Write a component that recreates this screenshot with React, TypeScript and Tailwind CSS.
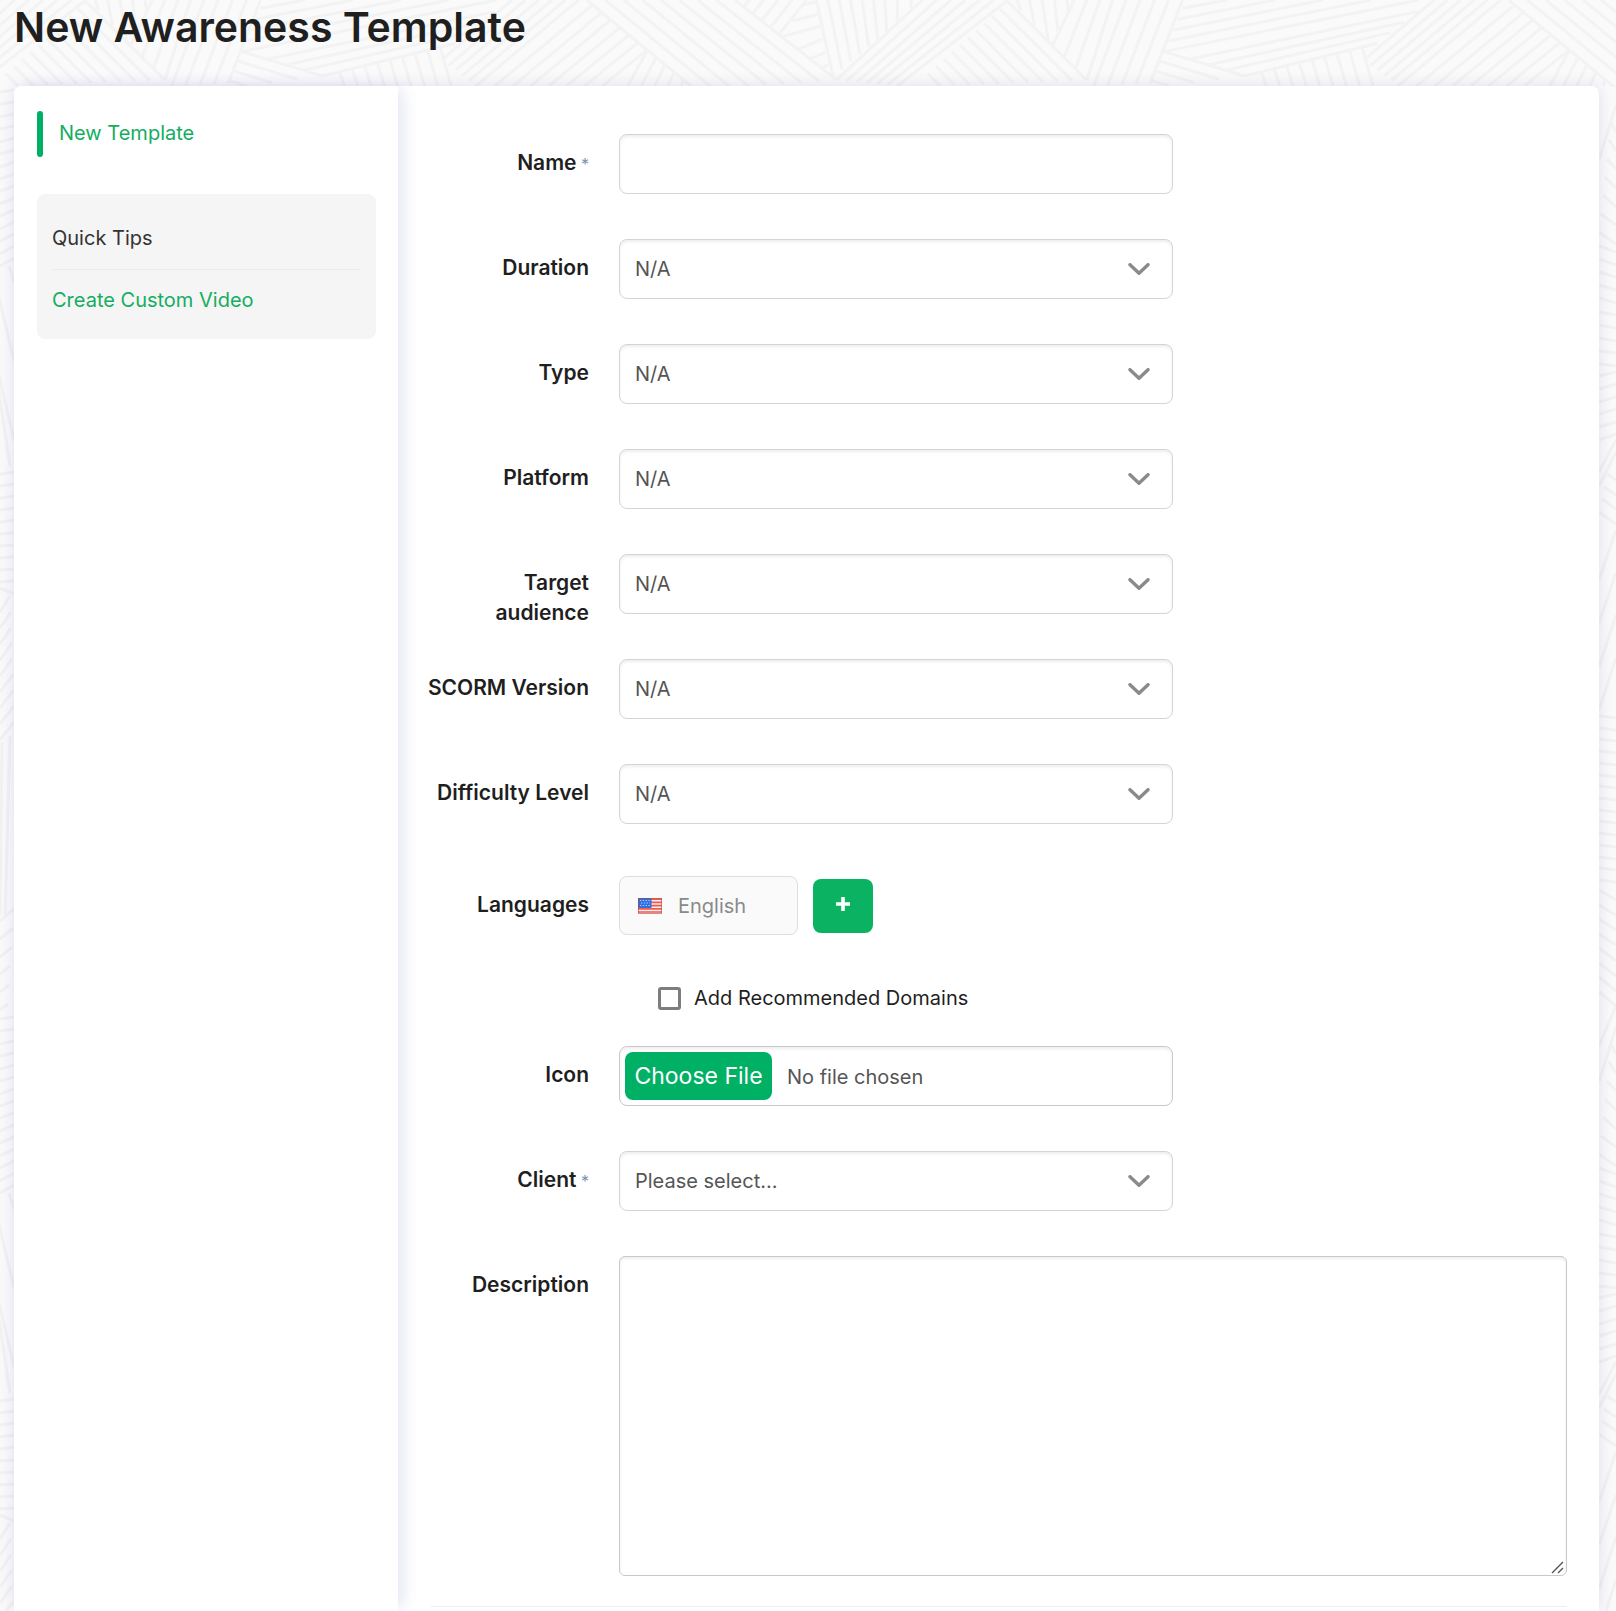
import type { ReactNode } from "react";

type Segment = [number, number, number, number];

/** Draws `n` strokes spread evenly between segment `a` and segment `b`. */
function Fan({ a, b, n }: { a: Segment; b: Segment; n: number }) {
  let d = "";
  for (let i = 0; i < n; i++) {
    const t = n === 1 ? 0 : i / (n - 1);
    const p = a.map((v, k) => Math.round(v + (b[k] - v) * t));
    d += `M${p[0]} ${p[1]}L${p[2]} ${p[3]}`;
  }
  return <path d={d} vectorEffect="non-scaling-stroke" />;
}

function WeaveTile() {
  return (
    <g id="weave-tile">
      <g transform="translate(560 0) scale(0.357 0.333)">
        <Fan a={[75, 0, 380, 270]} b={[490, 0, 775, 240]} n={9} />
        <Fan a={[245, 150, 190, 258]} b={[345, 235, 340, 258]} n={5} />
        <Fan a={[515, 20, 530, 0]} b={[612, 105, 690, 0]} n={5} />
        <Fan a={[680, 15, 720, 5]} b={[622, 110, 730, 78]} n={3} />
        <Fan a={[662, 150, 735, 118]} b={[730, 205, 750, 195]} n={3} />
        <Fan a={[718, 0, 765, 230]} b={[910, 0, 915, 95]} n={7} />
        <Fan a={[945, 0, 945, 65]} b={[985, 0, 982, 25]} n={2} />
        <Fan a={[1015, 0, 775, 240]} b={[1255, 0, 945, 258]} n={7} />
        <Fan a={[1030, 220, 1065, 258]} b={[1255, 5, 1475, 240]} n={11} />
        <Fan a={[1280, 0, 1290, 30]} b={[1350, 0, 1368, 122]} n={3} />
        <Fan a={[1385, 0, 1395, 95]} b={[1420, 0, 1425, 35]} n={2} />
      </g>
      <g transform="translate(1080 0) scale(0.342 0.333)">
        <Fan a={[-17, 0, -79, 135]} b={[95, 0, 20, 240]} n={4} />
        <Fan a={[135, 0, 40, 258]} b={[300, 0, 205, 250]} n={5} />
        <Fan a={[300, 25, 430, 0]} b={[245, 155, 990, 0]} n={5} />
        <Fan a={[320, 178, 985, 35]} b={[480, 228, 870, 130]} n={4} />
        <Fan a={[245, 155, 480, 228]} b={[205, 240, 260, 258]} n={4} />
        <Fan a={[530, 215, 545, 258]} b={[825, 142, 857, 258]} n={9} />
        <Fan a={[1035, 0, 830, 180]} b={[1230, 0, 930, 258]} n={6} />
        <Fan a={[1270, 15, 985, 258]} b={[1430, 150, 1300, 258]} n={7} />
      </g>
    </g>
  );
}

function Weave() {
  return (
    <div aria-hidden="true" className="pointer-events-none absolute inset-0 overflow-hidden">
      <svg className="absolute top-0 left-0" width="3300" height="87" fill="none" stroke="#f3f3f3" strokeWidth="3">
        <WeaveTile />
        <use href="#weave-tile" x="-922" />
        <use href="#weave-tile" x="922" />
      </svg>
      <svg className="absolute top-[87px] left-0" width="14" height="1524" viewBox="0 87 14 1524" fill="none" stroke="#f2f2f2" strokeWidth="3">
        <g id="rail-left">
          <Fan a={[0, 92, 14, 90]} b={[0, 266, 14, 258]} n={15} />
          <Fan a={[9, 266, 14, 282]} b={[-14, 320, 14, 440]} n={3} />
          <Fan a={[-12, 320, 10, 466]} b={[-30, 320, -2, 466]} n={2} />
          <Fan a={[0, 474, 14, 472]} b={[0, 582, 14, 581]} n={10} />
          <Fan a={[0, 588, 14, 594]} b={[0, 588, 14, 594]} n={1} />
          <Fan a={[0, 612, 10, 596]} b={[0, 740, 14, 722]} n={9} />
          <Fan a={[2, 742, 0, 915]} b={[10, 736, 5, 915]} n={2} />
          <Fan a={[0, 921, 14, 909]} b={[0, 1010, 8, 1004]} n={6} />
        </g>
        <use href="#rail-left" y="927" />
      </svg>
      <svg className="absolute top-[87px] right-0" width="17" height="1524" viewBox="0 87 17 1524" fill="none" stroke="#f2f2f2" strokeWidth="3">
        <g id="rail-right">
          <Fan a={[0, 160, 17, 105]} b={[0, 160, 17, 105]} n={1} />
          <Fan a={[12, 122, 17, 132]} b={[0, 232, 17, 244]} n={7} />
          <Fan a={[0, 246, 17, 252]} b={[0, 364, 17, 366]} n={10} />
          <Fan a={[0, 376, 17, 372]} b={[0, 440, 17, 434]} n={6} />
          <Fan a={[0, 486, 17, 452]} b={[0, 472, 17, 440]} n={2} />
          <Fan a={[8, 474, 17, 480]} b={[0, 512, 17, 524]} n={4} />
          <Fan a={[0, 580, 17, 530]} b={[0, 710, 17, 658]} n={4} />
          <Fan a={[0, 716, 17, 718]} b={[0, 880, 17, 882]} n={15} />
          <Fan a={[0, 890, 17, 900]} b={[0, 992, 17, 1006]} n={8} />
          <Fan a={[0, 1046, 17, 1006]} b={[0, 1030, 17, 1000]} n={1} />
        </g>
        <use href="#rail-right" y="922" />
      </svg>
    </div>
  );
}

const control =
  "w-full max-w-[554px] h-15 rounded-lg border border-[#d4d4d4] bg-white px-[15px] text-[20px] leading-[30px] text-[#555] shadow-[inset_0_2px_3px_rgba(0,0,0,0.07)] outline-none";

const labelText =
  "-ml-3 w-[170px] shrink-0 pt-[14px] text-right text-[21px] leading-[30px] font-semibold whitespace-pre-line text-[#1f1f1f]";

function Row({ id, label, required, children }: { id: string; label: string; required?: boolean; children: ReactNode }) {
  return (
    <div className="flex h-15 items-start gap-[30px]">
      <label htmlFor={id} className={labelText}>
        {label}
        {required && <span className="text-[16px] font-normal text-[#7b93b0]"> *</span>}
      </label>
      <div className="min-w-0 flex-1">{children}</div>
    </div>
  );
}

function SelectBox({ id, value }: { id: string; value: string }) {
  return (
    <div className="relative max-w-[554px]">
      <select id={id} className={`${control} appearance-none`} defaultValue={value}>
        <option>{value}</option>
      </select>
      <svg className="pointer-events-none absolute top-6 right-[23px]" width="22" height="14" viewBox="0 0 22 14" fill="none" stroke="#8a8a8a" strokeWidth="3.4" strokeLinecap="round" strokeLinejoin="round">
        <path d="M2 1.7 L11 10.2 L20 1.7" />
      </svg>
    </div>
  );
}

function UsFlag() {
  return (
    <svg width="24" height="16" viewBox="0 0 24 16" aria-hidden="true">
      <rect width="24" height="16" fill="#fbeeee" />
      <path d="M0 1.2H24M0 4.4H24M0 7.6H24M0 10.8H24M0 14H24" stroke="#f4594f" strokeWidth="1.7" />
      <rect width="13.5" height="10" fill="#2f6fe0" />
      <path d="M2 2.5H12M3 5H12M2 7.5H12" stroke="#a9c6fa" strokeWidth="1.2" strokeDasharray="1.4 1.4" />
      <rect x="0.5" y="0.5" width="23" height="15" fill="none" stroke="#a8432f" strokeOpacity="0.55" />
    </svg>
  );
}

const selects = [
  ["duration", "Duration"],
  ["type", "Type"],
  ["platform", "Platform"],
  ["audience", "Target\naudience"],
  ["scorm", "SCORM Version"],
  ["difficulty", "Difficulty Level"],
];

export default function App() {
  return (
    <div className="relative flex min-h-screen flex-col bg-[#fafafa] font-['Inter',sans-serif] text-[#1f1f1f]">
      <Weave />
      <h1 className="relative px-[14px] pt-[2px] pb-[34px] text-[41px] leading-[50px] font-semibold">New Awareness Template</h1>
      <div className="relative mr-[17px] ml-[14px] flex flex-1 rounded-t-lg bg-white shadow-[0_0_15px_rgba(90,80,200,0.16)]">
        <aside className="z-10 w-[384px] shrink-0 rounded-tl-lg bg-white pt-[25px] pr-[22px] pl-[23px] text-[20px] leading-[30px] shadow-[9px_0_15px_-4px_rgba(90,100,180,0.16)]">
          <nav className="flex items-center gap-4">
            <span className="h-[46px] w-[6px] rounded-full bg-[#00b065]" />
            <a href="#new" className="pb-[2px] text-[#14ad62]">New Template</a>
          </nav>
          <section className="mt-[37px] rounded-lg bg-[#f5f5f5] px-[15px] pt-[29px] pb-6">
            <h2 className="border-b border-[#ebebeb] pb-4 text-[#333]">Quick Tips</h2>
            <a href="#video" className="mt-[15px] block text-[#14ad62]">Create Custom Video</a>
          </section>
        </aside>
        <form className="min-w-0 flex-1 pt-12 pr-8 pl-[33px]">
          <div className="flex flex-col gap-[45px]">
            <Row id="name" label="Name" required>
              <input id="name" type="text" className={control} />
            </Row>
            {selects.map(([id, label]) => (
              <Row key={id} id={id} label={label}>
                <SelectBox id={id} value="N/A" />
              </Row>
            ))}
          </div>
          <div className="mt-[52px]">
            <Row id="language" label="Languages">
              <div className="flex items-center gap-[15px]">
                <div className="flex h-[59px] w-[179px] items-center gap-4 rounded-lg border border-[#dedede] bg-[#fafafa] pl-[18px]">
                  <UsFlag />
                  <input id="language" type="text" disabled defaultValue="English" className="w-24 text-[20px] leading-[30px] text-[#8a8a8a]" />
                </div>
                <button type="button" aria-label="Add language" className="flex h-[54px] w-15 items-center justify-center rounded-lg bg-[#0bb262] pb-1">
                  <svg width="14" height="14" viewBox="0 0 14 14" stroke="#fff" strokeWidth="3.6">
                    <path d="M7 0V14M0 7H14" />
                  </svg>
                </button>
              </div>
            </Row>
          </div>
          <label className="mt-[47px] ml-[227px] flex h-[30px] items-center gap-[13px] text-[20px] leading-[30px] whitespace-nowrap">
            <input type="checkbox" className="h-[23px] w-[23px] appearance-none rounded-[3px] border-[3px] border-[#7d7d7d] bg-white" />
            Add Recommended Domains
          </label>
          <div className="mt-[33px] flex flex-col gap-[45px]">
            <Row id="icon" label="Icon">
              <input
                id="icon"
                type="file"
                className="h-15 w-full max-w-[554px] rounded-lg border border-[#c9c9c9] bg-white p-[5px] text-[20px] leading-[48px] text-[#555] shadow-[inset_0_2px_3px_rgba(0,0,0,0.07)] file:mr-[15px] file:h-12 file:w-[147px] file:rounded-lg file:bg-[#00b065] file:pb-[2px] file:text-[23px] file:text-white"
              />
            </Row>
            <Row id="client" label="Client" required>
              <SelectBox id="client" value="Please select..." />
            </Row>
            <div className="flex items-start gap-[30px]">
              <label htmlFor="description" className={labelText}>
                Description
              </label>
              <div className="relative min-w-0 flex-1">
                <textarea id="description" className="block h-80 w-full resize-none rounded-md border border-[#c9c9c9] bg-white p-4 text-[20px] text-[#555] shadow-[inset_0_2px_3px_rgba(0,0,0,0.07)] outline-none" />
                <svg className="pointer-events-none absolute right-[3px] bottom-[2px]" width="13" height="13" viewBox="0 0 13 13" stroke="#555" strokeWidth="1.4" aria-hidden="true">
                  <path d="M1 12L12 1M7 12L12 7" />
                </svg>
              </div>
            </div>
          </div>
          <hr className="mt-[30px] border-[#ededed]" />
        </form>
      </div>
    </div>
  );
}
